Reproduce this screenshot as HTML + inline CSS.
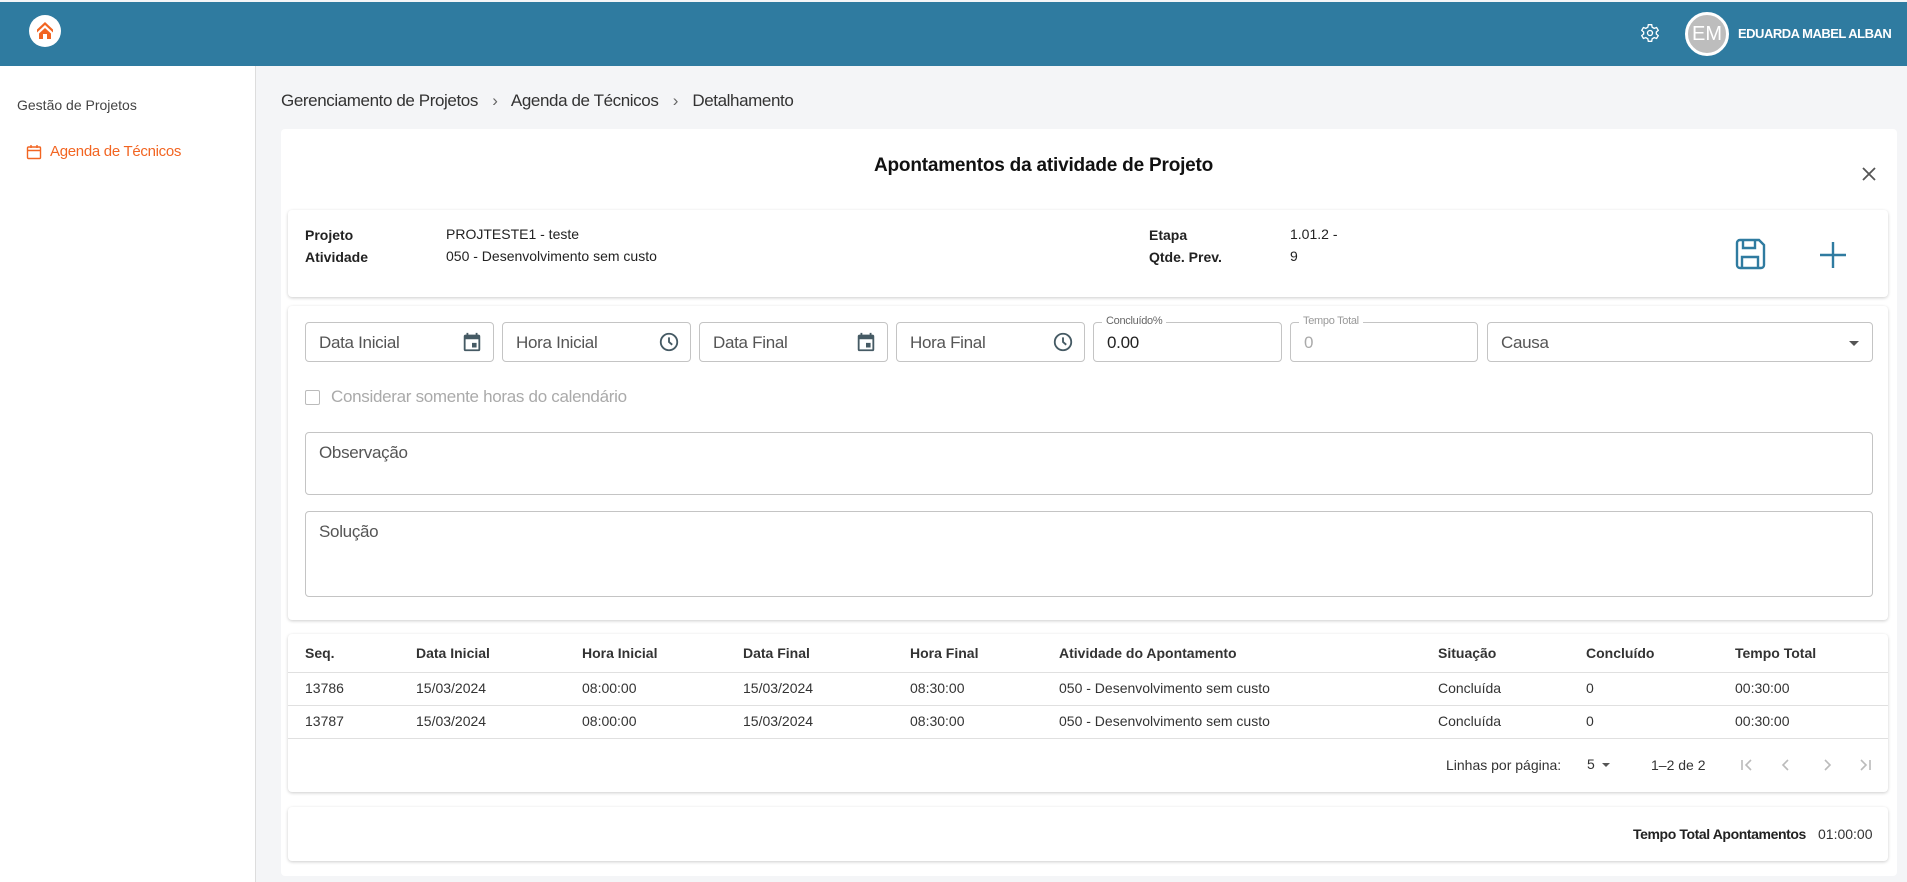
<!DOCTYPE html>
<html><head><meta charset="utf-8"><style>
*{box-sizing:border-box;margin:0;padding:0}
body{width:1907px;height:882px;overflow:hidden;background:#f4f5f7;font-family:"Liberation Sans",sans-serif;color:#333;position:relative}
.a{position:absolute;white-space:nowrap}
.hdr{left:0;top:2px;width:1907px;height:64px;background:#2f7ba0}
.side{left:0;top:66px;width:256px;height:816px;background:#fff;border-right:1px solid #ddd}
.card{background:#fff;border-radius:4px}
.sub{background:#fff;border-radius:4px;box-shadow:0 1px 3px rgba(0,0,0,.2)}
.fld{border:1px solid #c4c4c4;border-radius:4px;height:40px;top:322px;font-size:17px;color:#555;padding:10px 13px;letter-spacing:-.3px}
.fld svg{position:absolute;right:10px;top:8px}
.leg{position:absolute;top:-8px;left:8px;background:#fff;padding:0 4px;font-size:11px;color:#666}
.th{top:645px;font-size:14px;font-weight:bold;color:#333}
.r1{top:680px;font-size:14px;color:#333}
.r2{top:713px;font-size:14px;color:#333}
.ln{height:1px;background:#e0e0e0;left:288px;width:1600px}
.pg{top:757px}
</style></head><body>
<div class="a hdr"></div>
<div class="a" style="left:29px;top:15px;width:32px;height:32px;border-radius:50%;background:#fff"></div>
<svg class="a" style="left:35px;top:20px" width="20" height="20" viewBox="0 0 20 20"><path d="M10 2L2 9.5v3L10 5l8 7.5v-3z M10 8l-6 5.5V19h4v-5h4v5h4v-5.5z" fill="#f26522"/></svg>
<svg class="a" style="left:1640px;top:23px" width="20" height="20" viewBox="0 0 24 24" fill="none" stroke="#fff" stroke-width="1.6"><circle cx="12" cy="12" r="3"/><path d="M10 2h4l.6 3 2.4 1.4 2.9-1 2 3.4-2.3 2v2.4l2.3 2-2 3.4-2.9-1-2.4 1.4L14 22h-4l-.6-3-2.4-1.4-2.9 1-2-3.4 2.3-2V10.8l-2.3-2 2-3.4 2.9 1L9.4 5z"/></svg>
<div class="a" style="left:1685px;top:12px;width:44px;height:44px;border-radius:50%;background:#bdbdbd;border:3px solid #fff;color:#fff;font-size:20px;text-align:center;line-height:38px">EM</div>
<div class="a" style="left:1738px;top:26px;color:#fff;font-weight:bold;font-size:13px;letter-spacing:-.5px">EDUARDA MABEL ALBAN</div>
<div class="a side"></div>
<div class="a" style="left:17px;top:97px;font-size:14px;color:#444">Gestão de Projetos</div>
<svg class="a" style="left:26px;top:144px" width="16" height="16" viewBox="0 0 16 16" fill="none" stroke="#f26522" stroke-width="1.4"><rect x="1.5" y="3" width="13" height="11.5" rx="1"/><path d="M1.5 6.5h13M5 1v3M11 1v3"/></svg>
<div class="a" style="left:50px;top:143px;font-size:15px;color:#f26522;letter-spacing:-.3px">Agenda de Técnicos</div>
<div class="a" style="left:281px;top:91px;font-size:17px;color:#333;letter-spacing:-.4px">Gerenciamento de Projetos <span style="color:#666;padding:0 10px">›</span> Agenda de Técnicos <span style="color:#666;padding:0 10px">›</span> Detalhamento</div>
<div class="a card" style="left:281px;top:129px;width:1616px;height:747px"></div>
<div class="a" style="left:874px;top:155px;font-size:19px;font-weight:bold;color:#111;letter-spacing:-.2px">Apontamentos da atividade de Projeto</div>
<svg class="a" style="left:1861px;top:166px" width="16" height="16" viewBox="0 0 16 16" stroke="#555" stroke-width="1.8"><path d="M2 2l12 12M14 2L2 14"/></svg>
<div class="a sub" style="left:288px;top:210px;width:1600px;height:87px"></div>
<div class="a" style="left:305px;top:227px;font-size:14px;font-weight:bold;color:#222">Projeto</div>
<div class="a" style="left:305px;top:249px;font-size:14px;font-weight:bold;color:#222">Atividade</div>
<div class="a" style="left:446px;top:226px;font-size:14px;color:#222">PROJTESTE1 - teste</div>
<div class="a" style="left:446px;top:248px;font-size:14px;color:#222">050 - Desenvolvimento sem custo</div>
<div class="a" style="left:1149px;top:227px;font-size:14px;font-weight:bold;color:#222">Etapa</div>
<div class="a" style="left:1149px;top:249px;font-size:14px;font-weight:bold;color:#222">Qtde. Prev.</div>
<div class="a" style="left:1290px;top:226px;font-size:14px;color:#222">1.01.2 -</div>
<div class="a" style="left:1290px;top:248px;font-size:14px;color:#222">9</div>
<svg class="a" style="left:1733px;top:237px" width="34" height="34" viewBox="0 0 34 34" fill="none" stroke="#2f7ba0" stroke-width="2.4"><path d="M4 6a3 3 0 0 1 3-3h19l5 5v20a3 3 0 0 1-3 3H7a3 3 0 0 1-3-3z"/><path d="M10 3v8h12V3M9 31V20h16v11"/></svg>
<svg class="a" style="left:1819px;top:241px" width="28" height="28" viewBox="0 0 28 28" stroke="#2f7ba0" stroke-width="2.4"><path d="M14 1v26M1 14h26"/></svg>
<div class="a sub" style="left:288px;top:306px;width:1600px;height:314px"></div>
<div class="a fld" style="left:305px;width:189px">Data Inicial<svg width="22" height="22" viewBox="0 0 24 24"><path fill="#455a64" d="M19 4h-1V2h-2v2H8V2H6v2H5a2 2 0 0 0-2 2v14a2 2 0 0 0 2 2h14a2 2 0 0 0 2-2V6a2 2 0 0 0-2-2zm0 16H5V9h14zm-7-7h5v5h-5z"/></svg></div>
<div class="a fld" style="left:502px;width:189px">Hora Inicial<svg width="22" height="22" viewBox="0 0 24 24" fill="none" stroke="#455a64" stroke-width="2"><circle cx="12" cy="12" r="9"/><path d="M12 7v5l3.5 3"/></svg></div>
<div class="a fld" style="left:699px;width:189px">Data Final<svg width="22" height="22" viewBox="0 0 24 24"><path fill="#455a64" d="M19 4h-1V2h-2v2H8V2H6v2H5a2 2 0 0 0-2 2v14a2 2 0 0 0 2 2h14a2 2 0 0 0 2-2V6a2 2 0 0 0-2-2zm0 16H5V9h14zm-7-7h5v5h-5z"/></svg></div>
<div class="a fld" style="left:896px;width:189px">Hora Final<svg width="22" height="22" viewBox="0 0 24 24" fill="none" stroke="#455a64" stroke-width="2"><circle cx="12" cy="12" r="9"/><path d="M12 7v5l3.5 3"/></svg></div>
<div class="a fld" style="left:1093px;width:189px;color:#222"><span class="leg">Concluído%</span>0.00</div>
<div class="a fld" style="left:1290px;width:188px;color:#aaa"><span class="leg" style="color:#999">Tempo Total</span>0</div>
<div class="a fld" style="left:1487px;width:386px">Causa<svg width="16" height="16" viewBox="0 0 16 16" style="top:12px"><path d="M3 6h10l-5 5z" fill="#555"/></svg></div>
<div class="a" style="left:305px;top:390px;width:15px;height:15px;border:1.5px solid #bbb;border-radius:2px"></div>
<div class="a" style="left:331px;top:387px;font-size:17px;color:#aaa;letter-spacing:-.3px">Considerar somente horas do calendário</div>
<div class="a" style="left:305px;top:432px;width:1568px;height:63px;border:1px solid #c4c4c4;border-radius:4px"></div>
<div class="a" style="left:319px;top:443px;font-size:17px;color:#555;letter-spacing:-.3px">Observação</div>
<div class="a" style="left:305px;top:511px;width:1568px;height:86px;border:1px solid #c4c4c4;border-radius:4px"></div>
<div class="a" style="left:319px;top:522px;font-size:17px;color:#555;letter-spacing:-.3px">Solução</div>
<div class="a sub" style="left:288px;top:634px;width:1600px;height:158px"></div>
<div class="a ln" style="top:672px"></div><div class="a ln" style="top:705px"></div><div class="a ln" style="top:738px"></div>
<div class="a th" style="left:305px">Seq.</div><div class="a th" style="left:416px">Data Inicial</div><div class="a th" style="left:582px">Hora Inicial</div><div class="a th" style="left:743px">Data Final</div><div class="a th" style="left:910px">Hora Final</div><div class="a th" style="left:1059px">Atividade do Apontamento</div><div class="a th" style="left:1438px">Situação</div><div class="a th" style="left:1586px">Concluído</div><div class="a th" style="left:1735px">Tempo Total</div>
<div class="a r1" style="left:305px">13786</div><div class="a r1" style="left:416px">15/03/2024</div><div class="a r1" style="left:582px">08:00:00</div><div class="a r1" style="left:743px">15/03/2024</div><div class="a r1" style="left:910px">08:30:00</div><div class="a r1" style="left:1059px">050 - Desenvolvimento sem custo</div><div class="a r1" style="left:1438px">Concluída</div><div class="a r1" style="left:1586px">0</div><div class="a r1" style="left:1735px">00:30:00</div>
<div class="a r2" style="left:305px">13787</div><div class="a r2" style="left:416px">15/03/2024</div><div class="a r2" style="left:582px">08:00:00</div><div class="a r2" style="left:743px">15/03/2024</div><div class="a r2" style="left:910px">08:30:00</div><div class="a r2" style="left:1059px">050 - Desenvolvimento sem custo</div><div class="a r2" style="left:1438px">Concluída</div><div class="a r2" style="left:1586px">0</div><div class="a r2" style="left:1735px">00:30:00</div>
<div class="a" style="left:1446px;top:757px;font-size:14px;color:#333">Linhas por página:</div>
<div class="a" style="left:1587px;top:756px;font-size:14px;color:#333">5</div>
<svg class="a" style="left:1600px;top:759px" width="12" height="12" viewBox="0 0 12 12"><path d="M2 4h8l-4 4z" fill="#555"/></svg>
<div class="a" style="left:1651px;top:757px;font-size:14px;color:#333">1–2 de 2</div>
<svg class="a pg" style="left:1739px" width="16" height="16" viewBox="0 0 16 16" fill="none" stroke="#bbb" stroke-width="1.6"><path d="M3 3v10M12 3L7 8l5 5"/></svg>
<svg class="a pg" style="left:1778px" width="16" height="16" viewBox="0 0 16 16" fill="none" stroke="#bbb" stroke-width="1.6"><path d="M10 3L5 8l5 5"/></svg>
<svg class="a pg" style="left:1819px" width="16" height="16" viewBox="0 0 16 16" fill="none" stroke="#bbb" stroke-width="1.6"><path d="M6 3l5 5-5 5"/></svg>
<svg class="a pg" style="left:1857px" width="16" height="16" viewBox="0 0 16 16" fill="none" stroke="#bbb" stroke-width="1.6"><path d="M4 3l5 5-5 5M13 3v10"/></svg>
<div class="a sub" style="left:288px;top:807px;width:1600px;height:54px"></div>
<div class="a" style="left:1633px;top:826px;font-size:14px;font-weight:bold;color:#222;letter-spacing:-.4px">Tempo Total Apontamentos</div>
<div class="a" style="left:1818px;top:826px;font-size:14px;color:#333">01:00:00</div>
</body></html>
